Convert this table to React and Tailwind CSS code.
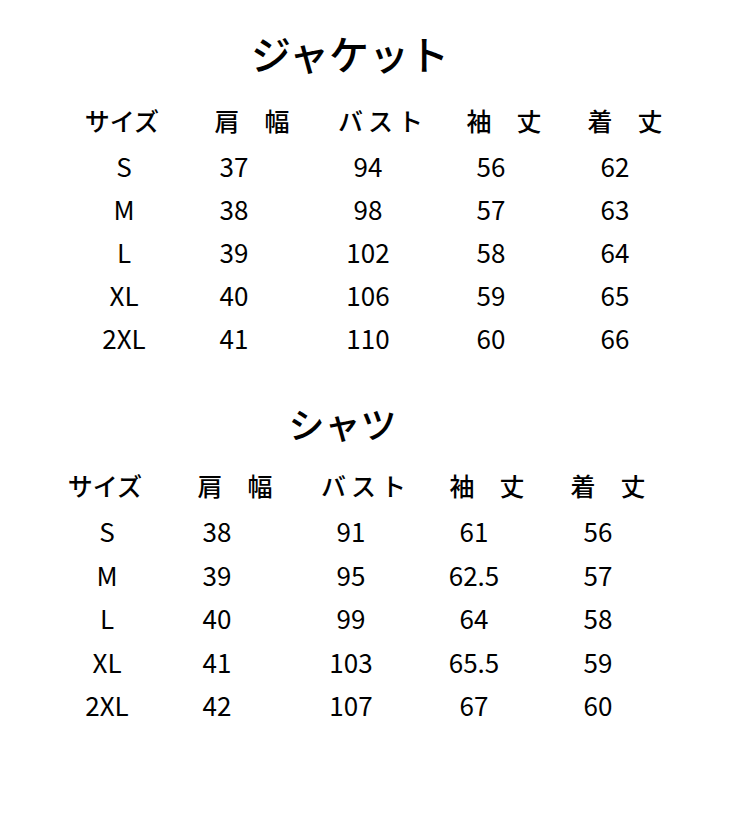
import React from "react";

const jacket = [
  ["S", "37", "94", "56", "62"],
  ["M", "38", "98", "57", "63"],
  ["L", "39", "102", "58", "64"],
  ["XL", "40", "106", "59", "65"],
  ["2XL", "41", "110", "60", "66"],
];

const shirt = [
  ["S", "38", "91", "61", "56"],
  ["M", "39", "95", "62.5", "57"],
  ["L", "40", "99", "64", "58"],
  ["XL", "41", "103", "65.5", "59"],
  ["2XL", "42", "107", "67", "60"],
];

const cols = "grid grid-cols-[110px_110px_158px_88px_160px]";

const SizeTable = ({ rows, rowH }) => (
  <div>
    <div className={`${cols} h-[43px] items-center whitespace-nowrap text-[25px] font-medium leading-[43px]`}>
      <div className="flex justify-center">
        <span className="-translate-x-[2px]">サイズ</span>
      </div>
      <div className="flex justify-center">
        <span className="translate-x-[18px]">肩　幅</span>
      </div>
      <div className="flex justify-center">
        <span className="translate-x-[15px] tracking-[5px]">バスト</span>
      </div>
      <div className="flex justify-center">
        <span className="translate-x-[13px]">袖　丈</span>
      </div>
      <div className="flex justify-center">
        <span className="translate-x-[10px]">着　丈</span>
      </div>
    </div>
    <div className="mt-[2px]">
      {rows.map((r) => (
        <div key={r[0]} className={`${cols} ${rowH} items-center text-[26px]`}>
          {r.map((v, i) => (
            <div key={i} className="text-center">
              {v}
            </div>
          ))}
        </div>
      ))}
    </div>
  </div>
);

const App = () => {
  return (
    <div
      className="w-[750px] h-[825px] bg-white text-black"
      style={{ fontFamily: '"Noto Sans CJK JP", "Noto Sans", sans-serif' }}
    >
      <div className="pt-[29px]">
        <h1 className="pr-[50px] text-center text-[40px] font-medium leading-[48px]">
          ジャケット
        </h1>
      </div>
      <div className="mt-[22px] ml-[69px]">
        <SizeTable rows={jacket} rowH="h-[43px] leading-[43px]" />
      </div>
      <div className="mt-[42px]">
        <h2 className="pr-[65px] text-center text-[36px] font-medium leading-[44px]">
          シャツ
        </h2>
      </div>
      <div className="mt-[19px] ml-[52px]">
        <SizeTable rows={shirt} rowH="h-[43.5px] leading-[43.5px]" />
      </div>
    </div>
  );
};

export default App;
